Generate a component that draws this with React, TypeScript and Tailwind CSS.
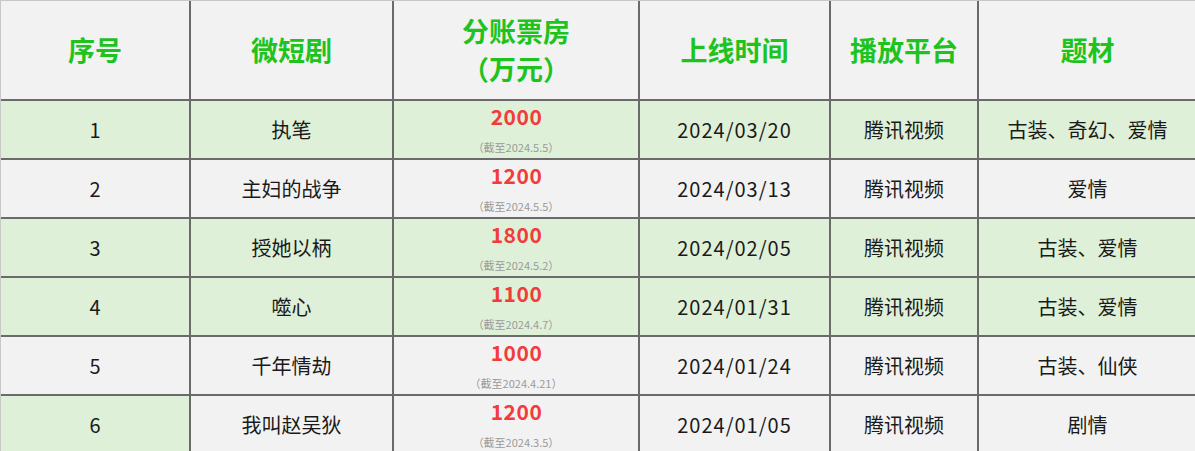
import React from "react";

const cols = ["w-[190px]", "w-[203px]", "w-[246px]", "w-[191px]", "w-[148px]", "w-[217px]"];

type Row = {
  no: string;
  name: string;
  box: string;
  note: string;
  date: string;
  platform: string;
  genre: string;
  green: boolean;
  firstGreen?: boolean;
};

const rows: Row[] = [
  { no: "1", name: "执笔", box: "2000", note: "（截至2024.5.5）", date: "2024/03/20", platform: "腾讯视频", genre: "古装、奇幻、爱情", green: true },
  { no: "2", name: "主妇的战争", box: "1200", note: "（截至2024.5.5）", date: "2024/03/13", platform: "腾讯视频", genre: "爱情", green: false },
  { no: "3", name: "授她以柄", box: "1800", note: "（截至2024.5.2）", date: "2024/02/05", platform: "腾讯视频", genre: "古装、爱情", green: true },
  { no: "4", name: "噬心", box: "1100", note: "（截至2024.4.7）", date: "2024/01/31", platform: "腾讯视频", genre: "古装、爱情", green: true },
  { no: "5", name: "千年情劫", box: "1000", note: "（截至2024.4.21）", date: "2024/01/24", platform: "腾讯视频", genre: "古装、仙侠", green: false },
  { no: "6", name: "我叫赵吴狄", box: "1200", note: "（截至2024.3.5）", date: "2024/01/05", platform: "腾讯视频", genre: "剧情", green: false, firstGreen: true },
];

const font = { fontFamily: '"Noto Sans CJK SC", "Noto Sans", sans-serif' };

function Cell({ i, green, children }: { i: number; green: boolean; children: React.ReactNode }) {
  return (
    <div
      className={`${cols[i]} shrink-0 h-full flex flex-col items-center justify-center border-b-2 border-[#6a6a6a] ${
        i < 5 ? "border-r-2" : ""
      } ${green ? "bg-[#dff0d8]" : "bg-[#f2f2f2]"}`}
    >
      {children}
    </div>
  );
}

export default function App() {
  return (
    <div
      className="w-[1195px] h-[451px] overflow-hidden bg-[#f2f2f2] border-l border-t border-[#c8c8c8] text-[#1a1a1a]"
      style={font}
    >
      <div className="flex h-[100px]">
        {["序号", "微短剧", "分账票房\n（万元）", "上线时间", "播放平台", "题材"].map((h, i) => (
          <Cell key={i} i={i} green={false}>
            <div className="text-[27px] leading-[38px] font-bold text-[#1ec31e] text-center whitespace-pre">{h}</div>
          </Cell>
        ))}
      </div>
      {rows.map((r) => (
        <div key={r.no} className="flex h-[59px]">
          <Cell i={0} green={r.green || !!r.firstGreen}>
            <span className="text-[20px]">{r.no}</span>
          </Cell>
          <Cell i={1} green={r.green}>
            <span className="text-[20px]">{r.name}</span>
          </Cell>
          <Cell i={2} green={r.green}>
            <span className="text-[21px] leading-[22px] font-bold text-[#f23c3c] tracking-[0.5px] pl-[1px] mt-[-2px]">{r.box}</span>
            <span className="text-[11px] leading-[12px] text-[#9a9a9a] mt-[14px]">{r.note}</span>
          </Cell>
          <Cell i={3} green={r.green}>
            <span className="text-[20px] tracking-[1px]">{r.date}</span>
          </Cell>
          <Cell i={4} green={r.green}>
            <span className="text-[20px]">{r.platform}</span>
          </Cell>
          <Cell i={5} green={r.green}>
            <span className="text-[20px]">{r.genre}</span>
          </Cell>
        </div>
      ))}
    </div>
  );
}
